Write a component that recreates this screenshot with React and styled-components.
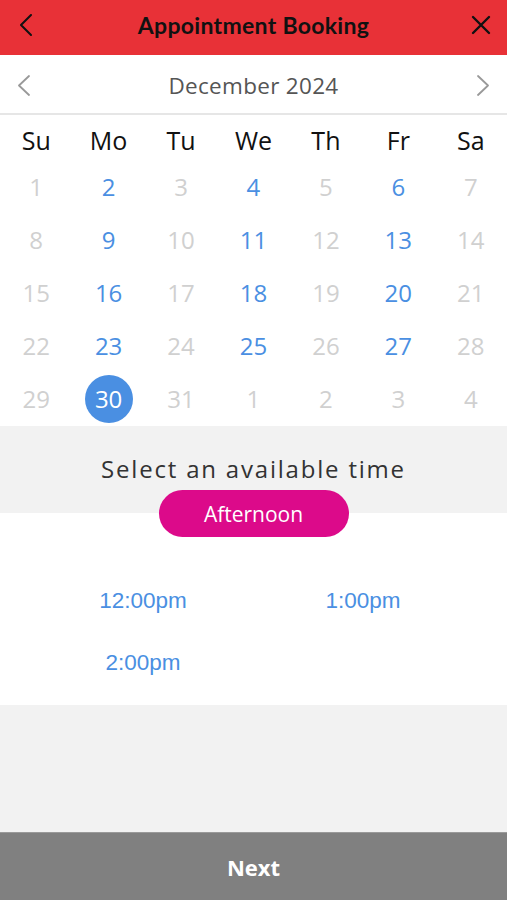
import React from "react";
import styled, { createGlobalStyle } from "styled-components";

const GlobalStyle = createGlobalStyle`
  body {
    margin: 0;
    font-family: "Open Sans", "Noto Sans", sans-serif;
    background: #f2f2f2;
  }
`;

const Page = styled.div`
  width: 507px;
  height: 900px;
  display: flex;
  flex-direction: column;
  background: #f2f2f2;
`;

const Header = styled.div`
  height: 55px;
  background: #e83137;
  display: flex;
  align-items: center;
  justify-content: space-between;
  padding: 0 14px 5px;
  box-sizing: border-box;
`;

const Title = styled.div`
  font-family: "Lato", "Open Sans", sans-serif;
  font-weight: 700;
  font-size: 23px;
  color: #111;
  letter-spacing: 0.3px;
`;

const IconButton = styled.div`
  width: 24px;
  height: 24px;
  display: flex;
  align-items: center;
  justify-content: center;
`;

const MonthBar = styled.div`
  height: 60px;
  background: #fff;
  border-bottom: 2px solid #e6e6e6;
  display: flex;
  align-items: center;
  justify-content: space-between;
  padding: 3px 18px 0;
  box-sizing: border-box;
`;

const MonthLabel = styled.div`
  font-size: 22.5px;
  color: #555;
  letter-spacing: 0.3px;
`;

const Calendar = styled.div`
  background: #fff;
  display: grid;
  grid-template-columns: repeat(7, 1fr);
  padding-bottom: 1px;
`;

const WeekDay = styled.div`
  height: 45px;
  display: flex;
  align-items: center;
  justify-content: center;
  font-size: 25px;
  color: #111;
  padding-top: 4px;
  box-sizing: border-box;
`;

const Day = styled.div`
  height: 53px;
  display: flex;
  align-items: center;
  justify-content: center;
`;

const DayNum = styled.div`
  width: 48px;
  height: 48px;
  border-radius: 50%;
  display: flex;
  align-items: center;
  justify-content: center;
  font-size: 24px;
  background: ${(p) => (p.$selected ? "#4a8fe2" : "transparent")};
  color: ${(p) =>
    p.$selected ? "#fff" : p.$available ? "#4a8fe2" : "#d0d0d0"};
`;

const TimeHeader = styled.div`
  height: 87px;
  background: #f2f2f2;
  display: flex;
  flex-direction: column;
  align-items: center;
  position: relative;
`;

const TimeTitle = styled.div`
  margin-top: 26px;
  font-size: 24px;
  color: #333;
  letter-spacing: 1.8px;
`;

const Pill = styled.div`
  position: absolute;
  top: 64px;
  left: 50%;
  transform: translateX(-50%);
  width: 190px;
  height: 47px;
  border-radius: 24px;
  background: #dc0a8a;
  color: #fff;
  font-size: 21px;
  display: flex;
  align-items: center;
  justify-content: center;
`;

const Slots = styled.div`
  background: #fff;
  height: 192px;
  display: grid;
  grid-template-columns: 220px 220px;
  grid-auto-rows: 62px;
  padding: 75px 33px 0;
  box-sizing: border-box;
`;

const Slot = styled.div`
  font-family: "Liberation Sans", Arial, sans-serif;
  font-size: 22.5px;
  color: #4a8fe2;
  text-align: center;
`;

const Spacer = styled.div`
  flex: 1;
  background: #f2f2f2;
`;

const NextBar = styled.div`
  height: 67px;
  background: #808080;
  border-top: 1px solid #9a9a9a;
  display: flex;
  align-items: center;
  justify-content: center;
  color: #fff;
  font-weight: 700;
  font-size: 22px;
`;

const Chevron = ({ dir = "left", color, w = 11, h = 21, sw = 2 }) => (
  <svg width={w + 2} height={h + 2} viewBox={`0 0 ${w + 2} ${h + 2}`}>
    <polyline
      points={
        dir === "left"
          ? `${w + 1},1 1,${h / 2 + 1} ${w + 1},${h + 1}`
          : `1,1 ${w + 1},${h / 2 + 1} 1,${h + 1}`
      }
      fill="none"
      stroke={color}
      strokeWidth={sw}
      strokeLinecap="round"
      strokeLinejoin="round"
    />
  </svg>
);

const Close = () => (
  <svg width="22" height="22" viewBox="0 0 22 22">
    <path
      d="M3 3 L19 19 M19 3 L3 19"
      stroke="#111"
      strokeWidth="2.4"
      strokeLinecap="round"
    />
  </svg>
);

const weekDays = ["Su", "Mo", "Tu", "We", "Th", "Fr", "Sa"];

const days = [];
for (let d = 1; d <= 31; d++) {
  const col = (d - 1) % 7;
  days.push({ n: d, available: col === 1 || col === 3 || col === 5 });
}
[1, 2, 3, 4].forEach((n) => days.push({ n, available: false, other: true }));

const App = () => (
  <Page>
    <GlobalStyle />
    <Header>
      <IconButton>
        <Chevron dir="left" color="#111" w={10} h={20} sw={2} />
      </IconButton>
      <Title>Appointment Booking</Title>
      <IconButton>
        <Close />
      </IconButton>
    </Header>
    <MonthBar>
      <Chevron dir="left" color="#999" w={10} h={19} sw={1.8} />
      <MonthLabel>December 2024</MonthLabel>
      <Chevron dir="right" color="#999" w={10} h={19} sw={1.8} />
    </MonthBar>
    <Calendar>
      {weekDays.map((w) => (
        <WeekDay key={w}>{w}</WeekDay>
      ))}
      {days.map((d, i) => (
        <Day key={i}>
          <DayNum
            $available={d.available && !d.other && d.n !== 30}
            $selected={!d.other && d.n === 30}
          >
            {d.n}
          </DayNum>
        </Day>
      ))}
    </Calendar>
    <TimeHeader>
      <TimeTitle>Select an available time</TimeTitle>
      <Pill>Afternoon</Pill>
    </TimeHeader>
    <Slots>
      <Slot>12:00pm</Slot>
      <Slot>1:00pm</Slot>
      <Slot>2:00pm</Slot>
    </Slots>
    <Spacer />
    <NextBar>Next</NextBar>
  </Page>
);

export default App;
